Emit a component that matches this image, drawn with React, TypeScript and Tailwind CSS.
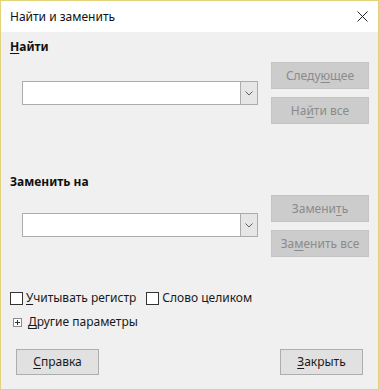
import React from 'react';

const font = { fontFamily: '"Noto Sans", "Open Sans", Arial, sans-serif' };

function U({ children }: { children: React.ReactNode }) {
  return <span className="underline underline-offset-2">{children}</span>;
}

function DisabledButton({ children }: { children: React.ReactNode }) {
  return (
    <div className="h-[27px] w-[98px] flex items-center justify-center bg-[#cccccc] border border-[#c4c4c4] text-[12px] text-[#8b8b8b]">
      {children}
    </div>
  );
}

function Button({ children }: { children: React.ReactNode }) {
  return (
    <div className="h-[26px] w-[83px] flex items-center justify-center bg-[#e1e1e1] border border-[#adadad] text-[12px] text-[#1a1a1a]">
      {children}
    </div>
  );
}

function Combo() {
  return (
    <div className="ml-[12px] w-[236px] h-[24px] flex bg-white border border-[#acacac]">
      <div className="flex-1" />
      <div className="w-[17px] h-full bg-[#e6e6e6] border-l border-[#acacac] flex items-center justify-center">
        <svg width="8" height="5" viewBox="0 0 8 5">
          <path d="M0.5 0.5 L4 4 L7.5 0.5" fill="none" stroke="#606060" strokeWidth="1" />
        </svg>
      </div>
    </div>
  );
}

function Checkbox({ children }: { children: React.ReactNode }) {
  return (
    <div className="flex items-center gap-[3px]">
      <div className="w-[13px] h-[13px] bg-white border border-[#333333]" />
      <span className="text-[12px] text-[#1a1a1a]">{children}</span>
    </div>
  );
}

export default function App() {
  return (
    <div style={font} className="w-[379px] h-[390px] flex flex-col bg-[#f0f0f0] border border-[#e0d37a] overflow-hidden">
      <div className="h-[31px] shrink-0 bg-white flex items-center justify-between pl-[9px] pr-[10px]">
        <span className="text-[12px] text-[#111111]">Найти и заменить</span>
        <svg width="11" height="11" viewBox="0 0 11 11">
          <path d="M0.5 0.5 L10.5 10.5 M10.5 0.5 L0.5 10.5" stroke="#222222" strokeWidth="1" />
        </svg>
      </div>

      <div className="flex flex-col pl-[9px] pr-[9px]">
        <div className="mt-[7px] text-[12px] font-bold text-[#111111] leading-4">
          <U>Н</U>айти
        </div>
        <div className="mt-[7px] flex justify-between">
          <div className="mt-[19px]"><Combo /></div>
          <div className="flex flex-col gap-2">
            <DisabledButton>Следу<U>ю</U>щее</DisabledButton>
            <DisabledButton>На<U>й</U>ти все</DisabledButton>
          </div>
        </div>

        <div className="mt-[50px] text-[12px] font-bold text-[#111111] leading-4">Заменить на</div>
        <div className="mt-[5px] flex justify-between">
          <div className="mt-[18px]"><Combo /></div>
          <div className="flex flex-col gap-2">
            <DisabledButton>Замени<U>т</U>ь</DisabledButton>
            <DisabledButton>За<U>м</U>енить все</DisabledButton>
          </div>
        </div>

        <div className="mt-[32px] flex items-center gap-[10px]">
          <Checkbox><U>У</U>читывать регистр</Checkbox>
          <Checkbox>Слово целиком</Checkbox>
        </div>
        <div className="mt-[6px] ml-[3px] flex items-center gap-[6px]">
          <svg width="9" height="9" viewBox="0 0 9 9">
            <rect x="0.5" y="0.5" width="8" height="8" fill="#ffffff" stroke="#8c8c8c" />
            <path d="M2 4.5 H7 M4.5 2 V7" stroke="#333333" />
          </svg>
          <span className="text-[12px] text-[#1a1a1a]"><U>Д</U>ругие параметры</span>
        </div>

        <div className="mt-[18px] flex justify-between pl-[6px] pr-[6px]">
          <Button><U>С</U>правка</Button>
          <Button><U>З</U>акрыть</Button>
        </div>
      </div>
    </div>
  );
}
